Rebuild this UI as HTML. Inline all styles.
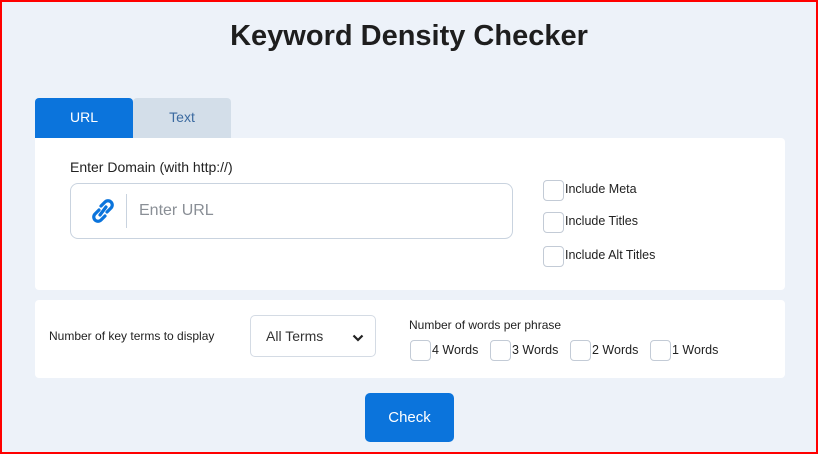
<!DOCTYPE html>
<html><head><style>
*{box-sizing:border-box;margin:0;padding:0}
body{width:818px;height:454px;overflow:hidden;background:#edf2f9;font-family:"Liberation Sans",sans-serif;color:#222;position:relative}
.frame{position:absolute;left:0;top:0;width:818px;height:454px;border:2px solid #f00;border-right-width:2px}
h1{position:absolute;top:20px;left:0;width:818px;text-align:center;font-size:29px;font-weight:bold;color:#1e1e1e}
.tab{position:absolute;top:98px;height:40px;width:98px;text-align:center;line-height:38px;font-size:14px;border-radius:4px 4px 0 0}
.p{position:absolute;left:35px;width:750px;background:#fff}
.cb{position:absolute;width:21px;height:21px;border:1px solid #c3cbd6;border-radius:4px;background:#fff}
.lb{position:absolute;font-size:12.5px;color:#222}
</style></head><body>
<h1>Keyword Density Checker</h1>
<div class="tab" style="left:35px;background:#0b74dc;color:#fff">URL</div>
<div class="tab" style="left:133px;background:#d3dee9;color:#3b6aa0">Text</div>
<div class="p" style="top:138px;height:152px;border-radius:0 4px 4px 4px"></div>
<div class="lb" style="left:70px;top:159px;font-size:14px">Enter Domain (with http://)</div>
<div style="position:absolute;left:70px;top:183px;width:443px;height:56px;border:1px solid #c9d3df;border-radius:8px;background:#fff">
<svg style="position:absolute;left:20px;top:13px" width="24" height="28" viewBox="0 0 24 28"><g fill="none" stroke="#0b74dc" stroke-width="3.2" stroke-linecap="round"><path d="M10 9 L14 5 a4 4 0 0 1 6 6 L16 15"/><path d="M14 19 L10 23 a4 4 0 0 1 -6 -6 L8 13"/><path d="M9 18 L15 10"/></g></svg>
<div style="position:absolute;left:55px;top:10px;width:1px;height:34px;background:#c9d3df"></div>
<div style="position:absolute;left:68px;top:18px;font-size:16px;color:#8a8f96">Enter URL</div>
</div>
<div class="cb" style="left:543px;top:180px"></div><div class="lb" style="left:565px;top:182px">Include Meta</div>
<div class="cb" style="left:543px;top:212px"></div><div class="lb" style="left:565px;top:214px">Include Titles</div>
<div class="cb" style="left:543px;top:246px"></div><div class="lb" style="left:565px;top:248px">Include Alt Titles</div>
<div class="p" style="top:300px;height:78px;border-radius:4px"></div>
<div class="lb" style="left:49px;top:329px;font-size:12px">Number of key terms to display</div>
<div style="position:absolute;left:250px;top:315px;width:126px;height:42px;border:1px solid #d4dbe4;border-radius:5px;background:#fff">
<div style="position:absolute;left:15px;top:12px;font-size:14px;color:#333">All Terms</div>
<svg style="position:absolute;left:101px;top:18px" width="12" height="8" viewBox="0 0 12 8"><path d="M1.5 1.5 L6 6 L10.5 1.5" fill="none" stroke="#222" stroke-width="2.2"/></svg>
</div>
<div class="lb" style="left:409px;top:318px;font-size:12px">Number of words per phrase</div>
<div class="cb" style="left:410px;top:340px"></div><div class="lb" style="left:432px;top:343px">4 Words</div>
<div class="cb" style="left:490px;top:340px"></div><div class="lb" style="left:512px;top:343px">3 Words</div>
<div class="cb" style="left:570px;top:340px"></div><div class="lb" style="left:592px;top:343px">2 Words</div>
<div class="cb" style="left:650px;top:340px"></div><div class="lb" style="left:672px;top:343px">1 Words</div>
<div style="position:absolute;left:365px;top:393px;width:89px;height:49px;background:#0b74dc;border-radius:5px;color:#fff;font-size:15px;text-align:center;line-height:49px">Check</div>
<div class="frame"></div>
</body></html>
